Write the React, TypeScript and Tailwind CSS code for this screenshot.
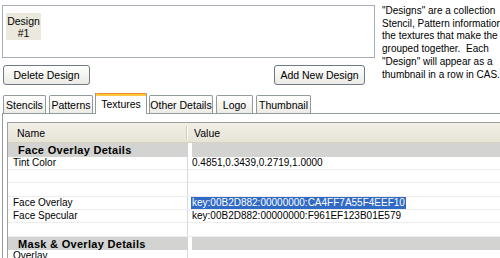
import React from "react";

const tabs = [
  { label: "Stencils", w: "w-[43px]" },
  { label: "Patterns", w: "w-[44px]" },
  { label: "Textures", w: "w-[52px]", active: true },
  { label: "Other Details", w: "w-[64px]" },
  { label: "Logo", w: "w-[37px]" },
  { label: "Thumbnail", w: "w-[55px]" },
];

function Row({
  name,
  value,
  h,
  selected,
}: {
  name?: string;
  value?: string;
  h: string;
  selected?: boolean;
}) {
  return (
    <div className={`flex ${h} border-b border-[#ececec]`}>
      <div className="w-[180px] shrink-0 pl-[5px] flex items-center border-r border-[#d9d9d9] whitespace-nowrap">
        {name}
      </div>
      <div className="flex-1 pl-[3px] flex items-center whitespace-nowrap">
        {value && (
          <span
            className={
              selected
                ? "bg-[#316ac5] text-white px-[1px] leading-[12px]"
                : "px-[1px]"
            }
          >
            {value}
          </span>
        )}
      </div>
    </div>
  );
}

function Category({ label, h }: { label: string; h: string }) {
  return (
    <div className={`flex ${h}`}>
      <div className="w-[180px] shrink-0 bg-[#d3d3d1] pl-[10px] flex items-center font-bold text-[11px] tracking-[0.3px] whitespace-nowrap">
        {label}
      </div>
      <div className="w-[4px] bg-white" />
      <div className="flex-1 bg-[#d3d3d1]" />
    </div>
  );
}

export default function App() {
  return (
    <div className="w-[500px] h-[258px] overflow-hidden bg-white text-black text-[10px] font-['Liberation_Sans',Arial,sans-serif] leading-[12px]">
      <div className="flex pt-[5px] pl-[2px]">
        <div className="w-[373px] shrink-0 flex flex-col">
          <div className="h-[53px] border border-[#a7adb4] pt-[7px] pl-[3px]">
            <div className="w-[35px] h-[27px] bg-[#ebe9dd] flex flex-col items-center justify-center leading-[12px] text-[10.5px]">
              <span>Design</span>
              <span>#1</span>
            </div>
          </div>
          <div className="flex justify-between mt-[7px] pl-[1px] pr-[10px]">
            <button className="w-[87px] h-[20px] rounded-[3px] border border-[#707a84] bg-gradient-to-b from-white to-[#ebeae4] text-[10.5px] text-black">
              Delete Design
            </button>
            <button className="w-[91px] h-[20px] rounded-[3px] border border-[#707a84] bg-gradient-to-b from-white to-[#ebeae4] text-[10.5px] text-black">
              Add New Design
            </button>
          </div>
        </div>
        <div className="ml-[7px] leading-[12.7px] text-[10px] whitespace-nowrap">
          <div>&quot;Designs&quot; are a collection</div>
          <div>Stencil, Pattern information</div>
          <div>the textures that make the</div>
          <div>grouped together.&nbsp; Each</div>
          <div>&quot;Design&quot; will appear as a</div>
          <div>thumbnail in a row in CAS.</div>
        </div>
      </div>

      <div className="mt-[8px] h-[20px] flex items-end pl-[3px] gap-[3px]">
        {tabs.map((t) =>
          t.active ? (
            <div
              key={t.label}
              className={`${t.w} h-[21px] -mx-[1px] -mb-[1px] relative z-10 bg-white border-x border-[#919b9c] flex flex-col`}
            >
              <div className="h-[1px] bg-[#e68b2c] rounded-t-[2px]" />
              <div className="h-[2px] bg-[#ffc83c]" />
              <div className="flex-1 flex items-center justify-center text-[10.5px] pb-[2px]">
                {t.label}
              </div>
            </div>
          ) : (
            <div
              key={t.label}
              className={`${t.w} h-[18px] rounded-t-[2px] border-t border-x border-[#919b9c] bg-gradient-to-b from-white to-[#ecebe5] flex items-center justify-center text-[10.5px]`}
            >
              {t.label}
            </div>
          )
        )}
      </div>

      <div className="ml-[2px] border-t border-l border-[#919b9c] pt-[8px] pl-[4px]">
        <div className="border-t border-l border-[#a0a0a0]">
          <div className="flex h-[20px] bg-gradient-to-b from-[#f1efe6] to-[#e7e4d7] border-b border-[#d6d2c2]">
            <div className="w-[178px] shrink-0 pl-[9px] flex items-center text-[10.5px]">
              Name
            </div>
            <div className="w-[2px] my-[3px] bg-[#d0ccbc] border-r border-white" />
            <div className="flex-1 pl-[6px] flex items-center text-[10.5px]">
              Value
            </div>
          </div>
          <Category label="Face Overlay Details" h="h-[14px]" />
          <Row name="Tint Color" value="0.4851,0.3439,0.2719,1.0000" h="h-[13px]" />
          <Row h="h-[13px]" />
          <Row h="h-[14px]" />
          <Row
            name="Face Overlay"
            value="key:00B2D882:00000000:CA4FF7A55F4EEF10"
            h="h-[13px]"
            selected
          />
          <Row
            name="Face Specular"
            value="key:00B2D882:00000000:F961EF123B01E579"
            h="h-[13px]"
          />
          <Row h="h-[14px]" />
          <Category label="Mask & Overlay Details" h="h-[13px]" />
          <Row name="Overlay" h="h-[13px]" />
        </div>
      </div>
    </div>
  );
}
